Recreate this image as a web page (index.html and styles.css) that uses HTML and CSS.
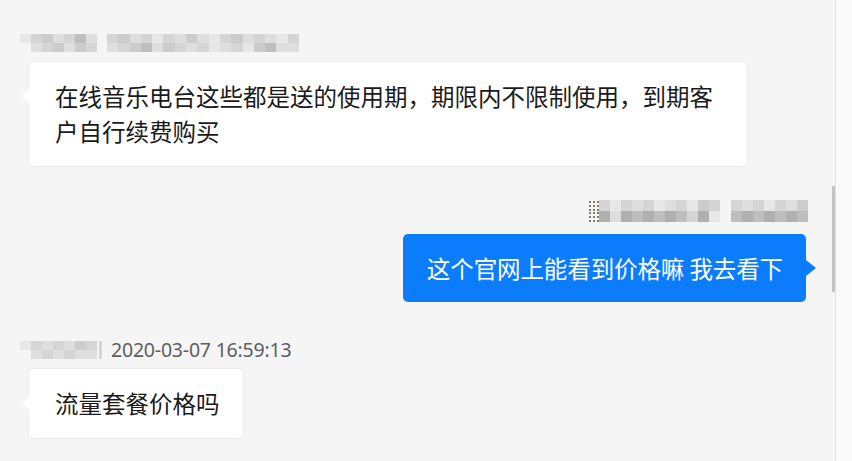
FILE: index.html
```html
<!DOCTYPE html>
<html lang="zh-CN">
<head>
<meta charset="utf-8">
<title>chat</title>
<link rel="stylesheet" href="styles.css">
</head>
<body>
<div class="window">
  <div class="pane">
    <div class="msg left first">
      <div class="meta">
        <div class="mosaic w7">
          <span class="l"></span><span class="x"></span>
          <span class="b"></span><span class="a"></span>
          <span class="c"></span><span class="b"></span>
          <span class="a"></span><span class="c"></span>
          <span class="b"></span><span class="a"></span>
          <span class="d"></span><span class="c"></span>
          <span class="a"></span><span class="b"></span>
        </div>
        <div class="mosaic w17">
          <span class="b"></span><span class="a"></span>
          <span class="c"></span><span class="b"></span>
          <span class="a"></span><span class="c"></span>
          <span class="b"></span><span class="d"></span>
          <span class="l"></span><span class="a"></span>
          <span class="b"></span><span class="c"></span>
          <span class="a"></span><span class="b"></span>
          <span class="c"></span><span class="a"></span>
          <span class="a"></span><span class="b"></span>
          <span class="l"></span><span class="l"></span>
          <span class="b"></span><span class="a"></span>
          <span class="c"></span><span class="b"></span>
          <span class="a"></span><span class="l"></span>
          <span class="b"></span><span class="c"></span>
          <span class="a"></span><span class="d"></span>
          <span class="l"></span><span class="a"></span>
          <span class="b"></span><span class="a"></span>
        </div>
      </div>
      <div class="bubble">在线音乐电台这些都是送的使用期，期限内不限制使用，到期客户自行续费购买</div>
    </div>

    <div class="msg right second">
      <div class="meta tall">
        <div class="mosaic w12 dark">
          <span class="dots"></span><span class="dots"></span>
          <span class="b"></span><span class="e"></span>
          <span class="l"></span><span class="a"></span>
          <span class="b"></span><span class="e"></span>
          <span class="a"></span><span class="d"></span>
          <span class="b"></span><span class="e"></span>
          <span class="l"></span><span class="d"></span>
          <span class="a"></span><span class="e"></span>
          <span class="b"></span><span class="d"></span>
          <span class="l"></span><span class="b"></span>
          <span class="c"></span><span class="e"></span>
          <span class="b"></span><span class="l"></span>
        </div>
        <div class="mosaic w7 dark">
          <span class="b"></span><span class="d"></span>
          <span class="a"></span><span class="e"></span>
          <span class="b"></span><span class="d"></span>
          <span class="l"></span><span class="e"></span>
          <span class="b"></span><span class="d"></span>
          <span class="a"></span><span class="e"></span>
          <span class="c"></span><span class="d"></span>
        </div>
      </div>
      <div class="bubble blue">这个官网上能看到价格嘛 我去看下</div>
    </div>

    <div class="msg left third">
      <div class="meta">
        <div class="mosaic w7">
          <span class="l"></span><span class="x"></span>
          <span class="b"></span><span class="a"></span>
          <span class="a"></span><span class="b"></span>
          <span class="b"></span><span class="a"></span>
          <span class="a"></span><span class="b"></span>
          <span class="c"></span><span class="a"></span>
          <span class="b"></span><span class="a"></span>
        </div>
        <span class="sliver"></span>
        <span class="time">2020-03-07 16:59:13</span>
      </div>
      <div class="bubble">流量套餐价格吗</div>
    </div>
  </div>
  <div class="side"></div>
  <div class="thumb"></div>
</div>
</body>
</html>
```

FILE: styles.css
```css
* { box-sizing: border-box; }

html, body {
  margin: 0;
  padding: 0;
}

body {
  width: 852px;
  height: 461px;
  overflow: hidden;
  background: #f5f5f5;
  font-family: "Noto Sans CJK SC", "Noto Sans", sans-serif;
  color: #1a1a1a;
}

.window {
  position: relative;
  display: flex;
  width: 852px;
  height: 461px;
}

.pane {
  width: 836px;
  height: 461px;
  padding: 33px 29px 0 29px;
  background: #f5f5f5;
  border-right: 1px solid #e2e2e2;
  display: flex;
  flex-direction: column;
}

.side {
  flex: 1;
  background: #f9f9f9;
}

.thumb {
  position: absolute;
  left: 832px;
  top: 186px;
  width: 3px;
  height: 106px;
  background: #c4c4c4;
}

.msg {
  display: flex;
  flex-direction: column;
}

.msg.left { align-items: flex-start; }
.msg.right { align-items: flex-end; }

.msg.second { margin-top: 33px; }
.msg.third { margin-top: 38px; }

.meta {
  display: flex;
  align-items: center;
  height: 20px;
  margin-bottom: 9px;
  gap: 10px;
}

.msg.left .meta { margin-left: -9px; }
.msg.right .meta { margin-right: -2px; gap: 11px; }

.meta.tall {
  height: 24px;
  margin-bottom: 11px;
}

.mosaic {
  display: grid;
  grid-auto-flow: column;
  grid-template-rows: 9px 9px;
  grid-auto-columns: 11px;
  opacity: 0.9;
}

.mosaic.w17 { grid-auto-columns: 11.3px; }

.mosaic.dark { grid-template-rows: 11px 11px; }

.mosaic span { display: block; }
.mosaic .a { background: #dcdcdc; }
.mosaic .b { background: #d2d2d2; }
.mosaic .c { background: #c8c8c8; }
.mosaic .d { background: #b9b9b9; }
.mosaic .e { background: #a9a9a9; }
.mosaic .l { background: #e6e6e6; }
.mosaic .x { background: transparent; }
.mosaic .dots {
  background: radial-gradient(circle, #7a7060 1px, transparent 1.5px) 0 0 / 4px 4px;
}

.sliver {
  width: 3px;
  height: 18px;
  background: #d6d6d6;
  margin-left: -8px;
  margin-right: -9px;
}

.time {
  font-family: "Noto Sans", "Liberation Sans", sans-serif;
  font-size: 19.5px;
  color: #5e5e5e;
  line-height: 20px;
  margin-left: 8px;
  letter-spacing: -0.2px;
}

.bubble {
  position: relative;
  max-width: 718px;
  padding: 17px 23px 17px 26px;
  font-size: 23.5px;
  line-height: 35px;
  background: #ffffff;
  border-radius: 5px;
  box-shadow: 0 0 0 1px #ececec;
}

.bubble::before {
  content: "";
  position: absolute;
  left: -7px;
  top: 27px;
  border-top: 7px solid transparent;
  border-bottom: 7px solid transparent;
  border-right: 7px solid #ffffff;
}

.bubble.blue {
  background: #0b7cfb;
  color: #ffffff;
  box-shadow: none;
  padding: 17px 23px 17px 24px;
  line-height: 34px;
  letter-spacing: -0.1px;
}

.bubble.blue::before {
  left: auto;
  right: -10px;
  top: 26px;
  border-right: 0;
  border-left: 10px solid #0b7cfb;
  border-top-width: 8px;
  border-bottom-width: 8px;
}
```
